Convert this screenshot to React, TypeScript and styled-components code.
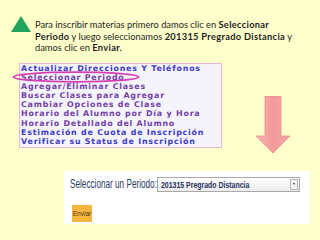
import React from "react";
import styled, { createGlobalStyle } from "styled-components";

const Global = createGlobalStyle`
  html, body { margin: 0; padding: 0; }
  body { background: #ffffcc; width: 320px; height: 240px; overflow: hidden; }
`;

const Page = styled.div`
  position: relative;
  width: 320px;
  height: 240px;
  background: #ffffcc;
  display: flex;
  flex-direction: column;
`;

const Intro = styled.div`
  display: flex;
  align-items: flex-start;
  padding: 16px 0 0 11px;
  gap: 4px;
`;

const Paragraph = styled.p`
  margin: 0;
  margin-top: 3px;
  font-family: "Lato", "Open Sans", sans-serif;
  font-size: 9.3px;
  line-height: 11.5px;
  color: #1e1e1e;
  b { font-weight: 700; letter-spacing: 0.3px; }
`;

const MenuBox = styled.div`
  margin: 9px 0 0 19px;
  width: 203px;
  box-sizing: border-box;
  border: 1px solid #eab4dc;
  background: #f6f4fb;
  padding: 0 0 1px 1px;
  position: relative;
  display: flex;
  flex-direction: column;
`;

const MenuItem = styled.div<{ $visited?: boolean }>`
  font-family: "DejaVu Sans", Verdana, sans-serif;
  font-weight: 700;
  font-size: 7.9px;
  letter-spacing: 0.8px;
  line-height: 9.17px;
  white-space: nowrap;
  color: ${(p) => (p.$visited ? "#7040aa" : "#3c3cc8")};
`;

const Ellipse = styled.svg`
  position: absolute;
  left: -8px;
  top: 7px;
`;

const Arrow = styled.svg`
  position: absolute;
  left: 254px;
  top: 96px;
`;

const FormPanel = styled.div`
  margin: 23px 0 0 64px;
  width: 246px;
  height: 53px;
  background: #ffffff;
  display: flex;
  flex-direction: column;
  padding: 5px 0 0 6px;
  box-sizing: border-box;
`;

const FieldRow = styled.div`
  display: flex;
  align-items: center;
  height: 16px;
`;

const Label = styled.span`
  font-family: "Liberation Sans", Arial, sans-serif;
  font-size: 12.5px;
  color: #2c3b63;
  display: inline-block;
  transform: scaleX(0.655);
  transform-origin: left center;
  width: 87px;
  white-space: nowrap;
`;

const Select = styled.div`
  width: 143px;
  height: 15px;
  box-sizing: border-box;
  border: 1px solid #a9a9a9;
  background: linear-gradient(#ffffff, #ececec);
  display: flex;
  align-items: center;
  justify-content: space-between;
  padding-left: 3px;
`;

const SelectText = styled.span`
  font-family: "Liberation Sans", Arial, sans-serif;
  font-weight: 700;
  font-size: 9.5px;
  color: #243060;
  display: inline-block;
  transform: scaleX(0.73);
  transform-origin: left center;
  white-space: nowrap;
  width: 90px;
`;

const DropBtn = styled.div`
  width: 8px;
  height: 11px;
  margin-right: 1px;
  border: 1px solid #b8b8b8;
  box-sizing: border-box;
  background: #f2f2f2;
  display: flex;
  align-items: center;
  justify-content: center;
  &::after {
    content: "";
    width: 0;
    height: 0;
    border-left: 1.5px solid transparent;
    border-right: 1.5px solid transparent;
    border-top: 2px solid #333;
  }
`;

const SendButton = styled.div`
  margin: 13px 0 0 2px;
  width: 20px;
  height: 17px;
  background: #f6b53c;
  font-family: "Liberation Sans", Arial, sans-serif;
  font-size: 6.5px;
  color: #4a3a20;
  display: flex;
  align-items: center;
  justify-content: center;
`;

const items: { t: string; v: boolean }[] = [
  { t: "Actualizar Direcciones Y Teléfonos", v: false },
  { t: "Seleccionar Periodo", v: true },
  { t: "Agregar/Eliminar Clases", v: true },
  { t: "Buscar Clases para Agregar", v: true },
  { t: "Cambiar Opciones de Clase", v: true },
  { t: "Horario del Alumno por Día y Hora", v: true },
  { t: "Horario Detallado del Alumno", v: true },
  { t: "Estimación de Cuota de Inscripción", v: false },
  { t: "Verificar su Status de Inscripción", v: false },
];

export default function App() {
  return (
    <Page>
      <Global />
      <Intro>
        <svg width="20" height="16" viewBox="0 0 20 16">
          <polygon points="10,0 20,16 0,16" fill="#22a35c" />
        </svg>
        <Paragraph>
          Para inscribir materias primero damos clic en <b>Seleccionar</b>
          <br />
          <b>Periodo</b> y luego seleccionamos <b>201315 Pregrado Distancia</b> y
          <br />
          damos clic en <b>Enviar.</b>
        </Paragraph>
      </Intro>
      <MenuBox>
        {items.map((it) => (
          <MenuItem key={it.t} $visited={it.v}>
            {it.t}
          </MenuItem>
        ))}
        <Ellipse width="128" height="12" viewBox="0 0 128 12">
          <ellipse cx="64" cy="6" rx="62.5" ry="4.8" fill="none" stroke="#d43fb4" strokeWidth="1.8" />
        </Ellipse>
      </MenuBox>
      <Arrow width="40" height="60" viewBox="0 0 40 60">
        <defs>
          <linearGradient id="ag" x1="0" y1="0" x2="1" y2="0">
            <stop offset="0" stopColor="#f7b4b4" />
            <stop offset="0.5" stopColor="#f49a9a" />
            <stop offset="1" stopColor="#f2a6a6" />
          </linearGradient>
        </defs>
        <polygon
          points="11,0 27,0 27,40 36,40 19,57 2,40 11,40"
          fill="url(#ag)"
          stroke="#e99090"
          strokeWidth="0.8"
        />
      </Arrow>
      <FormPanel>
        <FieldRow>
          <Label>Seleccionar un Periodo:</Label>
          <Select>
            <SelectText>201315 Pregrado Distancia</SelectText>
            <DropBtn />
          </Select>
        </FieldRow>
        <SendButton>Enviar</SendButton>
      </FormPanel>
    </Page>
  );
}
